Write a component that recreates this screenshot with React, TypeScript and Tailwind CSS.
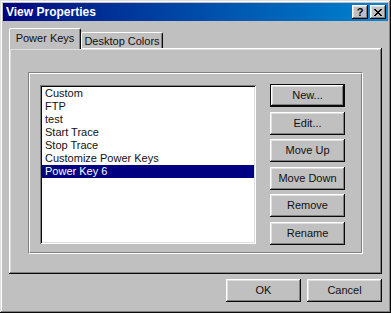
import { useState } from "react";

const raised =
  "shadow-[inset_-1px_-1px_#0a0a0a,inset_1px_1px_#ffffff,inset_-2px_-2px_#808080,inset_2px_2px_#dfdfdf]";
const raisedDefault =
  "shadow-[inset_0_0_0_1px_#0a0a0a,inset_-2px_-2px_#0a0a0a,inset_2px_2px_#ffffff,inset_-3px_-3px_#808080,inset_3px_3px_#dfdfdf]";
const sunken =
  "shadow-[inset_1px_1px_#808080,inset_-1px_-1px_#ffffff,inset_2px_2px_#0a0a0a,inset_-2px_-2px_#dfdfdf]";

const ITEMS = ["Custom", "FTP", "test", "Start Trace", "Stop Trace", "Customize Power Keys", "Power Key 6"];

function Btn({ label, isDefault }: { label: string; isDefault?: boolean }) {
  return (
    <button
      className={`w-[75px] h-[23px] bg-[#c0c0c0] text-[#111] text-[11px] leading-none flex items-center justify-center ${
        isDefault ? raisedDefault : raised
      }`}
    >
      {label}
    </button>
  );
}

function CloseGlyph() {
  // 8x7 pixel X
  const px = [
    [0, 0], [1, 0], [6, 0], [7, 0],
    [1, 1], [2, 1], [5, 1], [6, 1],
    [2, 2], [3, 2], [4, 2], [5, 2],
    [3, 3], [4, 3],
    [2, 4], [3, 4], [4, 4], [5, 4],
    [1, 5], [2, 5], [5, 5], [6, 5],
    [0, 6], [1, 6], [6, 6], [7, 6],
  ];
  return (
    <svg width="8" height="7" viewBox="0 0 8 7" shapeRendering="crispEdges">
      {px.map(([x, y]) => (
        <rect key={`${x}-${y}`} x={x} y={y} width="1" height="1" fill="#000" />
      ))}
    </svg>
  );
}

export default function App() {
  const [selected, setSelected] = useState(6);

  return (
    <div
      className={`w-[391px] h-[313px] bg-[#c0c0c0] p-[3px] flex flex-col shadow-[inset_-1px_-1px_#0a0a0a,inset_1px_1px_#dfdfdf,inset_-2px_-2px_#808080,inset_2px_2px_#ffffff] select-none`}
      style={{ fontFamily: '"Liberation Sans", Arial, sans-serif' }}
    >
      {/* Title bar */}
      <div className="h-[18px] shrink-0 bg-gradient-to-r from-[#000080] to-[#1084d0] flex items-center justify-between pl-[3px] pr-[2px]">
        <span className="text-white font-bold text-[12px] leading-none">View Properties</span>
        <div className="flex gap-[2px]">
          <div className={`w-[16px] h-[14px] bg-[#c0c0c0] flex items-center justify-center text-black font-bold text-[11px] leading-none ${raised}`}>
            ?
          </div>
          <div className={`w-[16px] h-[14px] bg-[#c0c0c0] flex items-center justify-center ${raised}`}>
            <CloseGlyph />
          </div>
        </div>
      </div>

      {/* Body */}
      <div className="flex-1 flex flex-col px-[6px] pt-[7px] pb-[8px]">
        {/* Tabs */}
        <div className="h-[20px] flex items-end">
          <div className="relative z-10 -mb-[1px] h-[21px] w-[72px] bg-[#c0c0c0] border-l border-t border-white border-r border-r-[#0a0a0a] rounded-t-[2px] shadow-[inset_-1px_0_#808080] flex justify-center pt-[3px] text-[11px] leading-[13px] text-[#111]">
            Power Keys
          </div>
          <div className="h-[16px] w-[82px] bg-[#c0c0c0] border-l border-t border-white border-r border-r-[#0a0a0a] rounded-t-[2px] shadow-[inset_-1px_0_#808080] flex justify-center pt-[2px] text-[11px] leading-[13px] text-[#111]">
            Desktop Colors
          </div>
        </div>

        {/* Panel */}
        <div className="w-[373px] h-[226px] shadow-[inset_-1px_-1px_#0a0a0a,inset_1px_1px_#ffffff,inset_-2px_-2px_#808080,inset_2px_2px_#dfdfdf] pt-[24px] pl-[19px] pr-[19px] pb-[20px]">
          {/* Etched group */}
          <div className="w-[335px] h-[182px] border border-t-[#808080] border-l-[#808080] border-r-white border-b-white">
            <div className="w-full h-full border border-t-white border-l-white border-r-[#808080] border-b-[#808080] flex pt-[11px] pl-[10px]">
              <div className={`w-[216px] h-[159px] bg-white p-[2px] ${sunken}`}>
                {ITEMS.map((item, i) => (
                  <div
                    key={item}
                    onClick={() => setSelected(i)}
                    className={`h-[13px] leading-[13px] text-[11px] pl-[3px] whitespace-nowrap ${
                      i === selected ? "bg-[#000080] text-white" : "text-[#111]"
                    }`}
                  >
                    {item}
                  </div>
                ))}
              </div>
              <div className="ml-[14px] -mt-[1px] flex flex-col gap-[4.6px]">
                <Btn label="New..." isDefault />
                <Btn label="Edit..." />
                <Btn label="Move Up" />
                <Btn label="Move Down" />
                <Btn label="Remove" />
                <Btn label="Rename" />
              </div>
            </div>
          </div>
        </div>

        {/* Dialog buttons */}
        <div className="w-[373px] mt-[5px] flex justify-end gap-[6px]">
          <Btn label="OK" />
          <Btn label="Cancel" />
        </div>
      </div>
    </div>
  );
}
